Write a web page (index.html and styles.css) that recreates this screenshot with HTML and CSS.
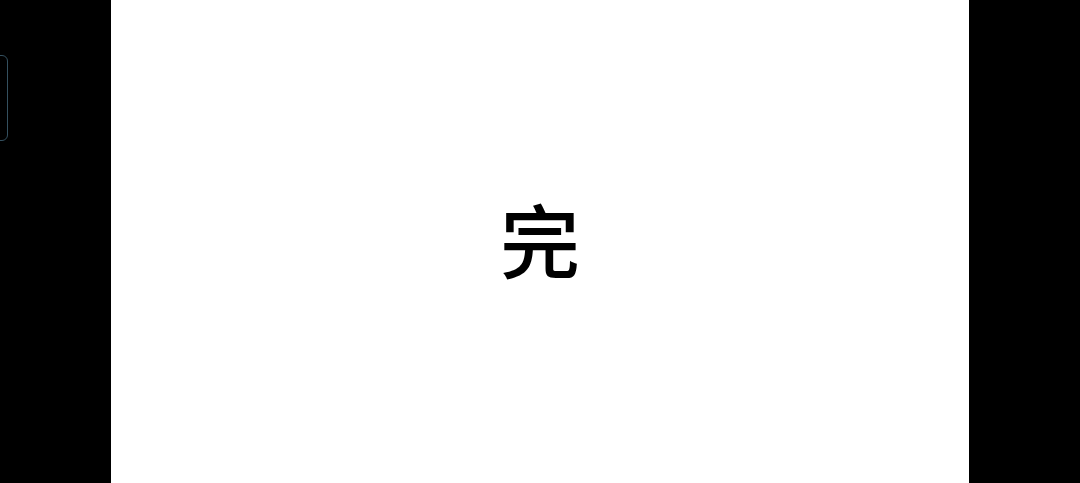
FILE: index.html
```html
<!DOCTYPE html>
<html lang="zh-CN">
<head>
    <meta charset="UTF-8">
    <meta name="viewport" content="width=device-width, initial-scale=1.0">
    <title>完</title>
    <link rel="stylesheet" href="styles.css">
</head>
<body>
    <div class="side-tab"></div>
    <main class="page">
        <p class="end-mark">完</p>
    </main>
</body>
</html>
```

FILE: styles.css
```css
html, body {
    height: 100%;
}
body {
    margin: 0;
    padding: 0;
    background-color: #000;
    display: flex;
    justify-content: center;
    overflow: hidden;
    position: relative;
}
.page {
    width: 858px;
    height: 100%;
    background-color: #fff;
    display: flex;
    align-items: center;
    justify-content: center;
}
.end-mark {
    margin: 0 0 10px 0;
    font-family: "Noto Sans CJK SC", "Noto Sans CJK JP", sans-serif;
    font-size: 80px;
    font-weight: 500;
    line-height: 1;
    color: #000;
}
.side-tab {
    position: absolute;
    left: -10px;
    top: 55px;
    width: 16px;
    height: 84px;
    border: 1px solid #34505f;
    border-radius: 6px;
}
```
